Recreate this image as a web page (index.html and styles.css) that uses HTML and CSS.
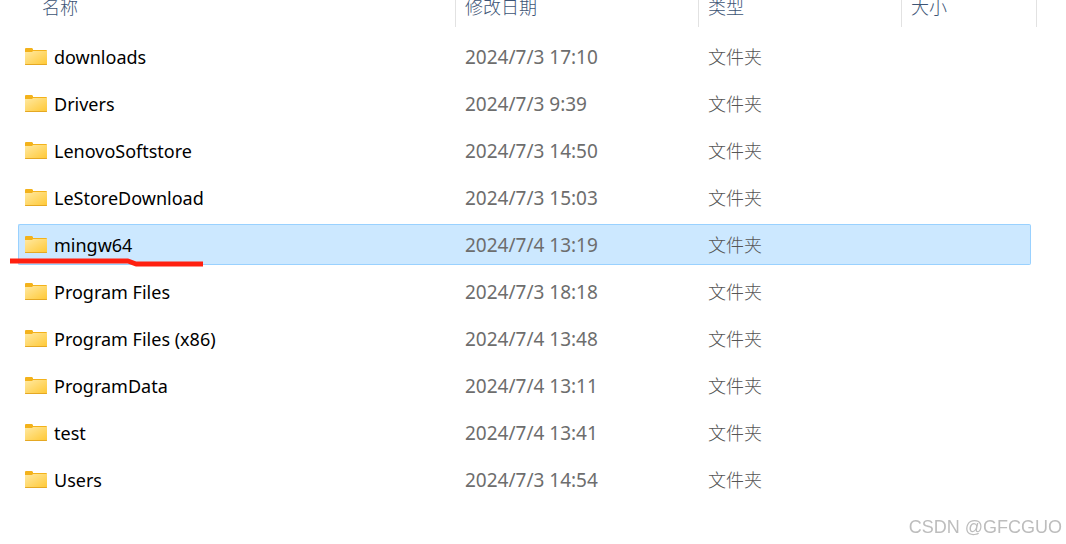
FILE: index.html
```
<!DOCTYPE html>
<html lang="zh-CN">
<head>
  <meta charset="UTF-8" />
  <meta name="viewport" content="width=device-width, initial-scale=1.0" />
  <title>文件夹</title>
  <link rel="stylesheet" href="styles.css">
</head>
<body>
  <!-- Shared folder icon -->
  <svg class="defs" width="0" height="0" aria-hidden="true">
    <defs>
      <linearGradient id="folder-fill" x1="0" y1="0" x2="1" y2="1">
        <stop offset="0" stop-color="#ffe9a2" />
        <stop offset="1" stop-color="#ffc937" />
      </linearGradient>
      <symbol id="folder" viewBox="0 0 22 17">
        <path d="M0 1Q0 0 1 0H7L8 1V2H21Q22 2 22 3V5H0Z" fill="#f3b21b" />
        <path d="M0 4H7L8 3H22V16H0Z" fill="url(#folder-fill)" />
        <path d="M0 16H22V16.500Q22 17 21 17H1Q0 17 0 16.500Z" fill="#e5a823" />
      </symbol>
    </defs>
  </svg>

  <!-- File list -->
  <table class="files">
    <colgroup>
      <col class="col-name" />
      <col class="col-date" />
      <col class="col-type" />
      <col />
      <col class="col-end" />
    </colgroup>
    <thead>
      <tr>
        <th class="name"><span>名称</span></th>
        <th><span>修改日期</span></th>
        <th><span>类型</span></th>
        <th class="size"><span>大小</span></th>
        <th class="end"><span></span></th>
      </tr>
    </thead>
    <tbody>
      <tr><td class="name"><svg class="icon"><use href="#folder" /></svg>downloads</td><td>2024/7/3 17:10</td><td class="type">文件夹</td><td></td></tr>
      <tr><td class="name"><svg class="icon"><use href="#folder" /></svg>Drivers</td><td>2024/7/3 9:39</td><td class="type">文件夹</td><td></td></tr>
      <tr><td class="name"><svg class="icon"><use href="#folder" /></svg>LenovoSoftstore</td><td>2024/7/3 14:50</td><td class="type">文件夹</td><td></td></tr>
      <tr><td class="name"><svg class="icon"><use href="#folder" /></svg>LeStoreDownload</td><td>2024/7/3 15:03</td><td class="type">文件夹</td><td></td></tr>
      <tr class="selected">
        <td class="name">
          <svg class="icon"><use href="#folder" /></svg>mingw64
          <svg class="underline" viewBox="0 0 194 10" aria-hidden="true"><path d="M0 3H118L126 6H193" /></svg>
        </td>
        <td>2024/7/4 13:19</td><td class="type">文件夹</td><td></td>
      </tr>
      <tr><td class="name"><svg class="icon"><use href="#folder" /></svg>Program Files</td><td>2024/7/3 18:18</td><td class="type">文件夹</td><td></td></tr>
      <tr><td class="name"><svg class="icon"><use href="#folder" /></svg>Program Files (x86)</td><td>2024/7/4 13:48</td><td class="type">文件夹</td><td></td></tr>
      <tr><td class="name"><svg class="icon"><use href="#folder" /></svg>ProgramData</td><td>2024/7/4 13:11</td><td class="type">文件夹</td><td></td></tr>
      <tr><td class="name"><svg class="icon"><use href="#folder" /></svg>test</td><td>2024/7/4 13:41</td><td class="type">文件夹</td><td></td></tr>
      <tr><td class="name"><svg class="icon"><use href="#folder" /></svg>Users</td><td>2024/7/3 14:54</td><td class="type">文件夹</td><td></td></tr>
    </tbody>
  </table>

  <div class="watermark">CSDN @GFCGUO</div>
</body>
</html>
```
FILE: styles.css
```
* { box-sizing: border-box; }

body {
  margin: 0;
  padding: 0 29px 0 18px;
  background: #fff;
  font-family: "Noto Sans", "Noto Sans CJK SC", sans-serif;
}

.defs {
  position: absolute;
}

.files {
  width: 100%;
  margin-top: -6px;
  table-layout: fixed;
  border-collapse: separate;
  border-spacing: 0 6px;
}

.col-name { width: 438px; }
.col-date { width: 243px; }
.col-type { width: 203px; }
.col-end { width: 6px; }

th {
  height: 30px;
  padding: 0;
  vertical-align: top;
  text-align: left;
  font-family: "Noto Sans CJK SC", sans-serif;
  font-size: 18px;
  font-weight: 300;
  line-height: 12px;
  color: #3d5475;
}

th span {
  display: block;
  height: 27px;
  padding-left: 9px;
  border-right: 1px solid #e2e2e2;
}

th.name span { padding-left: 24px; }
th.size span { border-right: none; }
th.end span { padding-left: 0; }

td {
  height: 41px;
  padding: 0 0 0 9px;
  font-size: 19px;
  line-height: 24px;
  color: #6d6d6d;
  white-space: nowrap;
}

td.name {
  position: relative;
  padding-left: 7px;
  font-size: 18px;
  color: #000;
}

td.type {
  padding-bottom: 2px;
  font-family: "Noto Sans CJK SC", sans-serif;
  font-size: 18px;
  font-weight: 300;
  color: #555;
}

.icon {
  width: 22px;
  height: 17px;
  margin-right: 7px;
  vertical-align: -1px;
}

.selected td {
  background: #cce8ff;
  border: 1px solid #99d1ff;
  border-width: 1px 0;
}

.selected td:first-child {
  padding-left: 6px;
  border-left-width: 1px;
  border-radius: 2px 0 0 2px;
}

.selected td:last-child {
  border-right-width: 1px;
  border-radius: 0 2px 2px 0;
}

/* red pen mark under the selected folder */
.underline {
  position: absolute;
  left: -9px;
  bottom: -4px;
  width: 194px;
  height: 10px;
  fill: none;
  stroke: #ff2010;
  stroke-width: 5;
  stroke-linejoin: round;
}

.watermark {
  position: fixed;
  right: 4px;
  bottom: 6px;
  font-family: "Liberation Sans", Arial, sans-serif;
  font-size: 18px;
  line-height: 22px;
  color: #bdbdbd;
}
```
